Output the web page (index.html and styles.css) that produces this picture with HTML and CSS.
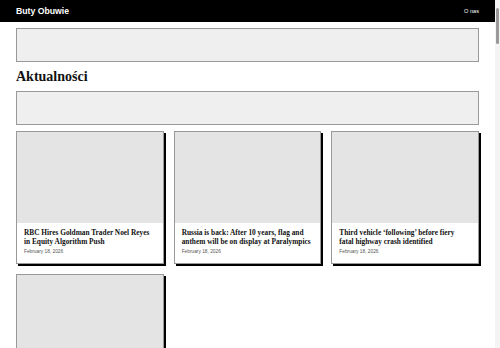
FILE: index.html
```html
<html>
<head>
    <link rel="stylesheet" href="styles.css">
</head>
<body>
    <header class="topbar">
        <a class="brand" href="#">Buty Obuwie</a>
        <nav class="menu">
            <a href="#">O nas</a>
        </nav>
    </header>

    <main class="page">
        <div class="ad-slot"></div>

        <h1 class="section-title">Aktualności</h1>

        <div class="ad-slot"></div>

        <div class="news-grid">
            <article class="card">
                <div class="card-image"></div>
                <div class="card-body">
                    <h2 class="card-title">RBC Hires Goldman Trader Noel Reyes in Equity Algorithm Push</h2>
                    <p class="card-date">February 18, 2026</p>
                </div>
            </article>
            <article class="card">
                <div class="card-image"></div>
                <div class="card-body">
                    <h2 class="card-title">Russia is back: After 10 years, flag and anthem will be on display at Paralympics</h2>
                    <p class="card-date">February 18, 2026</p>
                </div>
            </article>
            <article class="card">
                <div class="card-image"></div>
                <div class="card-body">
                    <h2 class="card-title">Third vehicle ‘following’ before fiery fatal highway crash identified</h2>
                    <p class="card-date">February 18, 2026</p>
                </div>
            </article>
            <article class="card">
                <div class="card-image"></div>
            </article>
        </div>
    </main>

    <div class="scrollbar"><div class="scrollbar-thumb"></div></div>
</body>
</html>
```

FILE: styles.css
```css
body {
    margin: 0;
    padding-right: 5px;
    font-family: "Liberation Sans", Arial, sans-serif;
    color: #111;
    background: #fff;
}
a {
    color: inherit;
    text-decoration: none;
}
.topbar {
    display: flex;
    align-items: center;
    justify-content: space-between;
    height: 22px;
    padding: 0 16px;
    background: #000;
    color: #fff;
}
.brand {
    font-size: 8.7px;
    font-weight: bold;
}
.menu {
    font-size: 5.6px;
}
.page {
    padding: 6px 16px 20px;
}
.ad-slot {
    height: 32px;
    background-color: #efefef;
    border: 1px solid #999;
}
.section-title {
    margin: 6px 0;
    font-family: "Liberation Serif", Georgia, serif;
    font-size: 14px;
    line-height: 17px;
    font-weight: bold;
    color: #111;
}
.news-grid {
    display: grid;
    grid-template-columns: repeat(3, 1fr);
    gap: 10px;
    margin-top: 6px;
}
.card {
    background: #fff;
    border: 1px solid #999;
    box-shadow: 2px 2px 0 #000;
}
.card-image {
    aspect-ratio: 16 / 10;
    background-color: #e4e4e4;
}
.card-body {
    padding: 6px 9px 8px 7px;
}
.card-title {
    margin: 0;
    height: 17px;
    font-family: "Liberation Serif", Georgia, serif;
    font-size: 7.35px;
    line-height: 8.5px;
    font-weight: bold;
    color: #111;
}
.card-date {
    margin: 3px 0 0;
    font-size: 4.8px;
    line-height: 6px;
    color: #555;
}

/* thin scroll track on the right edge, as in the screenshot */
.scrollbar {
    position: fixed;
    top: 0;
    right: 0;
    bottom: 0;
    width: 5px;
    background: #f4f4f4;
}
.scrollbar-thumb {
    margin: 8px 0 0 1px;
    width: 3px;
    height: 36px;
    border-radius: 2px;
    background: #9a9a9a;
}
```
